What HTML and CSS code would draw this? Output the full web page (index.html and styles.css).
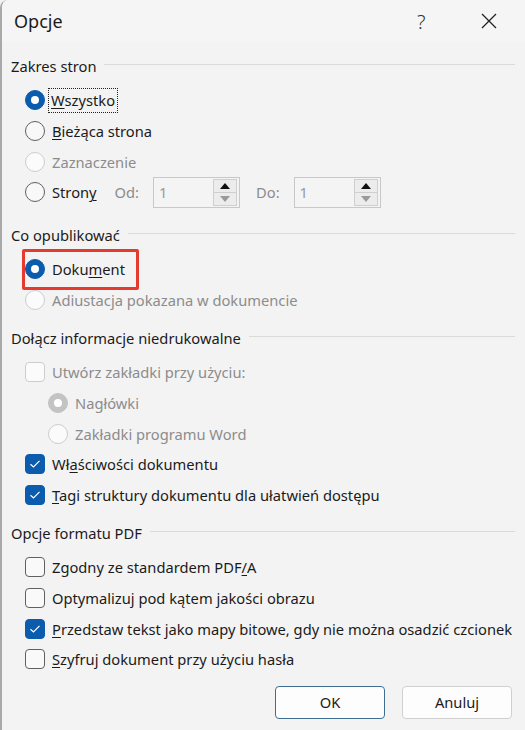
FILE: index.html
```html
<!DOCTYPE html>
<html lang="pl">
<head>
<meta charset="utf-8">
<title>Opcje</title>
<link rel="stylesheet" href="styles.css">
</head>
<body>
<div class="dialog">
  <div class="titlebar">
    <span class="title">Opcje</span>
    <span class="help">?</span>
    <span class="close"><svg width="16" height="16" viewBox="0 0 16 16"><path d="M1 1L15 15M15 1L1 15" stroke="#222" stroke-width="1.3" fill="none"/></svg></span>
  </div>

  <section class="group g1">
    <div class="group-head"><span>Zakres stron</span></div>
    <div class="row"><span class="radio on"></span><span class="label focus"><u>W</u>szystko</span></div>
    <div class="row"><span class="radio"></span><span class="label"><u>B</u>ieżąca strona</span></div>
    <div class="row"><span class="radio dis"></span><span class="label dim">Zaznaczenie</span></div>
    <div class="row">
      <span class="radio"></span><span class="label">Stron<u>y</u></span>
      <span class="field-label od">Od:</span>
      <span class="spin"><span class="spin-val">1</span><span class="spin-btns"><span class="sb up"></span><span class="sb down"></span></span></span>
      <span class="field-label do">Do:</span>
      <span class="spin"><span class="spin-val">1</span><span class="spin-btns"><span class="sb up"></span><span class="sb down"></span></span></span>
    </div>
  </section>

  <section class="group">
    <div class="group-head"><span>Co opublikować</span></div>
    <div class="row"><span class="mark"><span class="radio on"></span><span class="label">Doku<u>m</u>ent</span></span></div>
    <div class="row"><span class="radio dis"></span><span class="label dim">Adiustacja pokazana w dokumencie</span></div>
  </section>

  <section class="group">
    <div class="group-head"><span>Dołącz informacje niedrukowalne</span></div>
    <div class="row"><span class="check dis"></span><span class="label dim">Utwórz zakładki przy użyciu:</span></div>
    <div class="row sub"><span class="radio dis on-dis"></span><span class="label dim">Nagłówki</span></div>
    <div class="row sub"><span class="radio dis"></span><span class="label dim">Zakładki programu Word</span></div>
    <div class="row"><span class="check on"><svg width="12" height="10" viewBox="0 0 12 10"><path d="M1.5 5.2L4.5 8L10.5 1.8" stroke="#fff" stroke-width="1.2" fill="none"/></svg></span><span class="label">Wł<u>a</u>ściwości dokumentu</span></div>
    <div class="row"><span class="check on"><svg width="12" height="10" viewBox="0 0 12 10"><path d="M1.5 5.2L4.5 8L10.5 1.8" stroke="#fff" stroke-width="1.2" fill="none"/></svg></span><span class="label"><u>T</u>agi struktury dokumentu dla ułatwień dostępu</span></div>
  </section>

  <section class="group">
    <div class="group-head"><span>Opcje formatu PDF</span></div>
    <div class="row"><span class="check"></span><span class="label">Zgodny ze standardem PDF<u>/</u>A</span></div>
    <div class="row"><span class="check"></span><span class="label">Optymalizuj pod kątem jakości obrazu</span></div>
    <div class="row"><span class="check on"><svg width="12" height="10" viewBox="0 0 12 10"><path d="M1.5 5.2L4.5 8L10.5 1.8" stroke="#fff" stroke-width="1.2" fill="none"/></svg></span><span class="label"><u>P</u>rzedstaw tekst jako mapy bitowe, gdy nie można osadzić czcionek</span></div>
    <div class="row"><span class="check"></span><span class="label"><u>S</u>zyfruj dokument przy użyciu hasła</span></div>
  </section>

  <div class="buttons">
    <button class="btn default">OK</button>
    <button class="btn">Anuluj</button>
  </div>
</div>
</body>
</html>
```

FILE: styles.css
```css
html, body {
  margin: 0;
  padding: 0;
  background: #f3f3f3;
}
body {
  font-family: "Noto Sans", "Segoe UI", sans-serif;
  font-size: 14.7px;
  color: #1b1b1b;
}
.dialog {
  width: 525px;
  height: 730px;
  box-sizing: border-box;
  border-left: 2px solid #a9a9a9;
  border-top-left-radius: 8px;
  background: #f3f3f3;
  overflow: hidden;
}
.titlebar {
  height: 42px;
  display: flex;
  align-items: center;
  background: #f5f5f5;
}
.title {
  font-size: 18px;
  margin-left: 12px;
  flex: 1;
}
.help {
  font-size: 20px;
  color: #333;
  width: 20px;
  margin-right: 44px;
  font-weight: 300;
}
.close {
  width: 16px;
  height: 16px;
  margin-right: 28px;
  display: flex;
}
.group {
  padding-left: 9px;
  margin-top: 12.7px;
}
.g1 {
  margin-top: 14px;
  padding-bottom: 4.6px;
}
.group-head {
  height: 20px;
  display: flex;
  align-items: center;
  gap: 8px;
  padding-right: 10px;
  margin-bottom: 9px;
}
.group-head::after {
  content: "";
  flex: 1;
  height: 1px;
  background: #dadada;
  margin-top: -3px;
}
.row {
  height: 30.67px;
  display: flex;
  align-items: center;
  padding-left: 14px;
}
.row.sub {
  padding-left: 37px;
}
.label {
  margin-left: 7px;
  white-space: nowrap;
}
.label u {
  text-underline-offset: 2px;
  text-decoration-thickness: 1px;
}
.dim {
  color: #8c8c8c;
}
.focus {
  outline: 1px dotted #222;
  outline-offset: 0;
  padding: 1px 2px 2px 2px;
  margin-left: 4px;
}
.radio {
  width: 20px;
  height: 20px;
  box-sizing: border-box;
  border-radius: 50%;
  border: 1px solid #606060;
  background: #f8f8f8;
  flex: none;
  position: relative;
}
.radio.on {
  background: #0b5cad;
  border-color: #0b5cad;
}
.radio.on::after,
.radio.on-dis::after {
  content: "";
  position: absolute;
  left: 5px;
  top: 5px;
  width: 8px;
  height: 8px;
  border-radius: 50%;
  background: #fff;
}
.radio.dis {
  border-color: #cdcdcd;
  background: #fbfbfb;
}
.radio.on-dis {
  background: #c3c3c3;
  border-color: #c3c3c3;
}
.check {
  width: 20px;
  height: 20px;
  box-sizing: border-box;
  border-radius: 4px;
  border: 1px solid #606060;
  background: #f9f9f9;
  flex: none;
  display: flex;
  align-items: center;
  justify-content: center;
}
.check.on {
  background: #0b5cad;
  border-color: #0b5cad;
}
.check.dis {
  border-color: #cdcdcd;
  background: #fbfbfb;
}
.field-label {
  color: #8c8c8c;
}
.field-label.od {
  margin-left: 18px;
}
.field-label.do {
  margin-left: 16px;
}
.spin {
  width: 87px;
  height: 31px;
  box-sizing: border-box;
  border: 1px solid #c8c8c8;
  background: #f4f4f4;
  margin-left: 14px;
  display: flex;
  align-items: center;
}
.spin-val {
  flex: 1;
  color: #9a9a9a;
  padding-left: 5px;
}
.spin-btns {
  width: 24px;
  height: 27px;
  margin-right: 2px;
  display: flex;
  flex-direction: column;
}
.sb {
  flex: 1;
  border: 1px solid #cfcfcf;
  background: #ececec;
  display: flex;
  align-items: center;
  justify-content: center;
}
.sb.down {
  border-top: none;
}
.sb.up::after {
  content: "";
  border-left: 5px solid transparent;
  border-right: 5px solid transparent;
  border-bottom: 6px solid #111;
}
.sb.down::after {
  content: "";
  border-left: 5px solid transparent;
  border-right: 5px solid transparent;
  border-top: 6px solid #9a9a9a;
}
.mark {
  display: flex;
  align-items: center;
  flex: none;
  box-sizing: border-box;
  width: 117px;
  height: 41px;
  margin-left: -3px;
  border: 3.5px solid #e53b2f;
  border-left-width: 3px;
  border-radius: 2px;
}
.buttons {
  display: flex;
  justify-content: flex-end;
  gap: 17px;
  padding-right: 13px;
  margin-top: 11px;
}
.btn {
  width: 110px;
  height: 33px;
  box-sizing: border-box;
  border: 1px solid #d0d0d0;
  border-radius: 4px;
  background: #fdfdfd;
  font-family: "Noto Sans", "Segoe UI", sans-serif;
  font-size: 14.7px;
  color: #1b1b1b;
}
.btn.default {
  border: 1.5px solid #3e6f93;
}
```
